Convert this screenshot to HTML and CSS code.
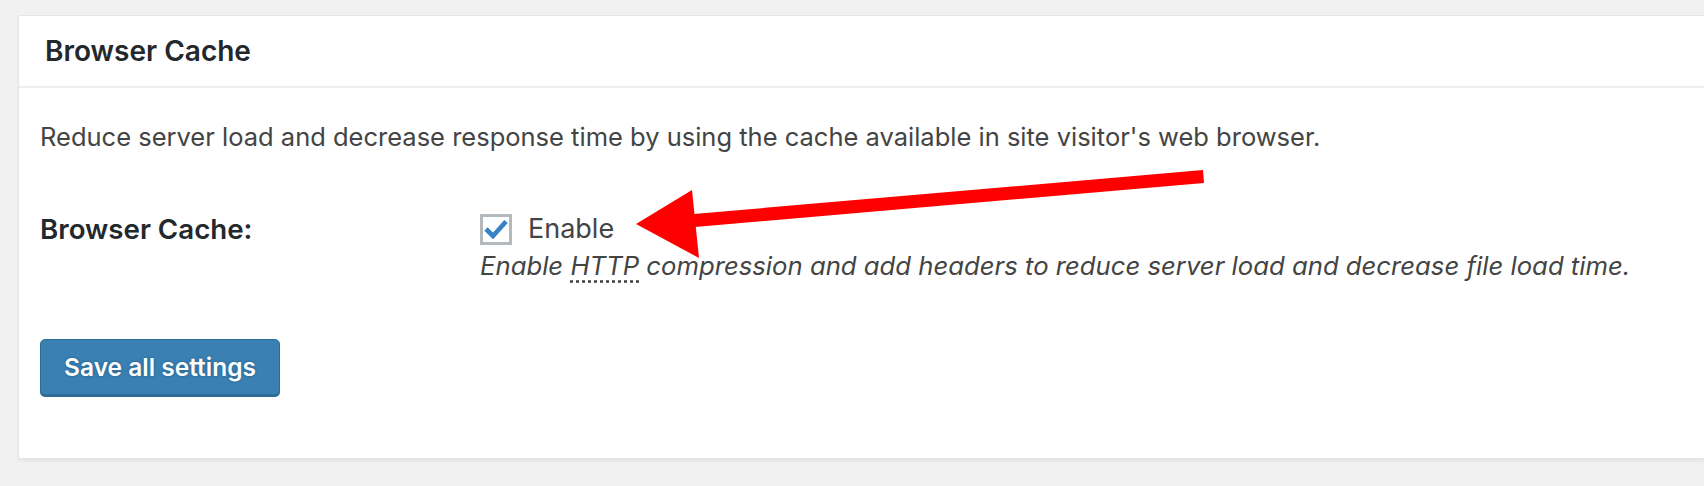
FILE: index.html
```html
<!DOCTYPE html>
<html>
  <head>
    <title>Browser Cache</title>
    <meta charset="UTF-8" />
    <link rel="stylesheet" href="styles.css">
  </head>

  <body>
    <div class="postbox">
      <h3 class="hndle">Browser Cache</h3>
      <div class="inside">
        <p class="intro">
          Reduce server load and decrease response time by using the cache available in site visitor's web browser.
        </p>

        <div class="form_row">
          <div class="form_label">Browser Cache:</div>
          <div class="form_field">
            <label class="enable">
              <span class="checkbox">
                <svg width="24" height="20" viewBox="0 0 24 20">
                  <path d="M2 10 L9 17 L22 2.5" fill="none" stroke="#3582c4" stroke-width="4.6" stroke-linejoin="miter" />
                </svg>
              </span>
              Enable
            </label>
            <p class="field_desc">
              Enable <abbr title="Hypertext Transfer Protocol">HTTP</abbr> compression and add headers to reduce server load and decrease file load time.
            </p>
          </div>
        </div>

        <button class="save_btn">Save all settings</button>
      </div>
    </div>

    <!-- annotation arrow drawn over the screenshot -->
    <svg class="arrow" width="1704" height="486" viewBox="0 0 1704 486">
      <path d="M1203 170 L1204 183 L695 227 L694 214 Z" fill="#ff0000" />
      <path d="M636 224 L692 190 L699 258 Z" fill="#ff0000" />
    </svg>
  </body>
</html>
```

FILE: styles.css
```css
body {
  margin: 0;
  padding: 15px 0 0 18px;
  background: #f1f1f1;
  font-family: "Inter", "Liberation Sans", sans-serif;
  color: #444;
  overflow: hidden;
  height: 486px;
  box-sizing: border-box;
}

.postbox {
  background: #fff;
  border: 1px solid #e5e5e5;
  border-right: none;
  box-shadow: 0 2px 3px rgba(0, 0, 0, 0.06);
  height: 444px;
  box-sizing: border-box;
}

.hndle {
  margin: 0;
  height: 70px;
  padding-left: 26px;
  display: flex;
  align-items: center;
  border-bottom: 2px solid #eee;
  font-size: 28px;
  font-weight: 600;
  color: #23282d;
}

.inside {
  padding: 32px 21px 0;
}

.intro {
  margin: 0;
  font-size: 25.5px;
  line-height: 34px;
}

.form_row {
  display: flex;
  margin-top: 57px;
}

.form_label {
  width: 440px;
  flex-shrink: 0;
  font-size: 27.7px;
  font-weight: 600;
  line-height: 36px;
  color: #23282d;
}

.enable {
  display: flex;
  align-items: center;
  gap: 16px;
  font-size: 27px;
  line-height: 36px;
  color: #444;
}

.checkbox {
  width: 32px;
  height: 31px;
  box-sizing: border-box;
  border: 3px solid #b4b9be;
  display: flex;
  align-items: center;
  justify-content: center;
  background: #fff;
}

.field_desc {
  margin: 1px 0 0;
  font-size: 25.7px;
  font-style: italic;
  line-height: 36px;
}

abbr {
  text-decoration: underline dotted;
  text-underline-offset: 5px;
}

.save_btn {
  margin-top: 55px;
  width: 240px;
  height: 56px;
  background: #3a80b2;
  border: 1px solid #2e6c98;
  border-radius: 5px;
  box-shadow: 0 2px 0 #2e6c98;
  color: #fff;
  font-family: "Inter", "Liberation Sans", sans-serif;
  font-size: 24.5px;
  font-weight: 600;
  text-shadow: 0 0 3px #1f5a85;
  cursor: pointer;
}

.arrow {
  position: absolute;
  top: 0;
  left: 0;
  pointer-events: none;
}
```
